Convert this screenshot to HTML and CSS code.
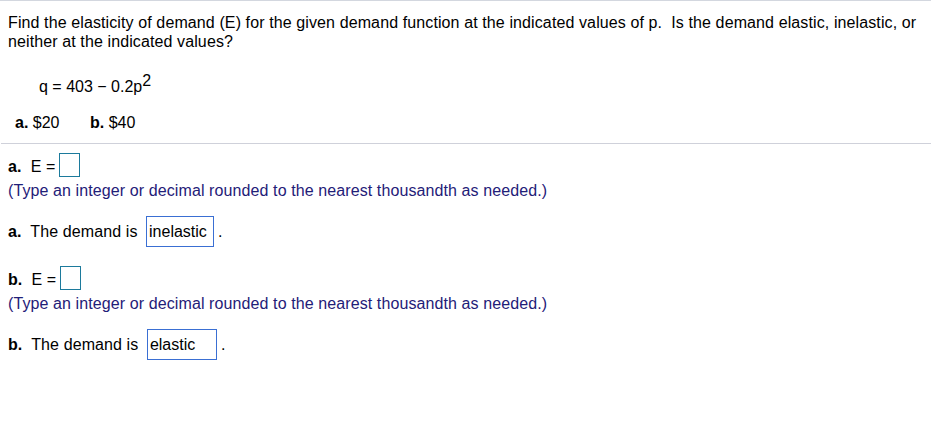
FILE: index.html
```html
<!DOCTYPE html>
<html lang="en">
<head>
  <meta charset="UTF-8" />
  <title>Elasticity of demand</title>
  <link rel="stylesheet" href="styles.css">
</head>
<body>
  <div class="question">
    <p class="prompt">Find the elasticity of demand (E) for the given demand function at the indicated values of p.&nbsp; Is the demand elastic, inelastic, or neither at the indicated values?</p>
    <p class="formula">q = 403 &minus; 0.2p<sup>2</sup></p>
    <p class="parts"><span class="part"><b>a.</b> $20</span><span class="part"><b>b.</b> $40</span></p>
  </div>

  <div class="answers">
    <div class="row first"><b>a.</b>&nbsp; E =<span class="blank"></span></div>
    <div class="hint">(Type an integer or decimal rounded to the nearest thousandth as needed.)</div>
    <div class="row demand"><b>a.</b>&nbsp; The demand is <span class="choice">inelastic</span>.</div>

    <div class="row second"><b>b.</b>&nbsp; E =<span class="blank"></span></div>
    <div class="hint">(Type an integer or decimal rounded to the nearest thousandth as needed.)</div>
    <div class="row demand"><b>b.</b>&nbsp; The demand is <span class="choice wide">elastic</span>.</div>
  </div>
</body>
</html>
```

FILE: styles.css
```css
body {
  margin: 0;
  font-family: "Liberation Sans", Arial, sans-serif;
  font-size: 16px;
  line-height: 19px;
  color: #000;
  background: #fff;
  border-top: 1px solid #d3d7df;
}

p {
  margin: 0;
}

.question {
  margin-left: 1px;
  padding: 12px 8px 11px 7px;
  border-bottom: 1px solid #cfd1da;
}

.prompt {
  letter-spacing: 0.11px;
}

.formula {
  margin: 26px 0 0 31px;
}

.formula sup {
  font-size: 16px;
  line-height: 0;
  vertical-align: 6px;
}

.parts {
  margin: 17px 0 0 7px;
}

.part {
  display: inline-block;
  width: 75px;
}

.answers {
  padding: 0 8px;
}

.row {
  white-space: pre;
  letter-spacing: 0.1px;
}

.row.first {
  margin-top: 9px;
}

.row.second {
  margin-top: 19px;
}

.blank {
  display: inline-block;
  width: 19px;
  height: 22px;
  border: 1px solid #1c7a9c;
  margin-left: 4px;
  vertical-align: -5px;
}

.hint {
  color: #1f2078;
  margin-top: 4px;
  letter-spacing: 0.1px;
}

.demand {
  margin-top: 16px;
}

.choice {
  display: inline-block;
  border: 1px solid #3a6fd3;
  padding: 5px 4px 5px 2px;
  width: 60px;
  margin: 0 4px 0 4px;
  letter-spacing: 0;
}

.choice.wide {
  width: 62px;
}
```
